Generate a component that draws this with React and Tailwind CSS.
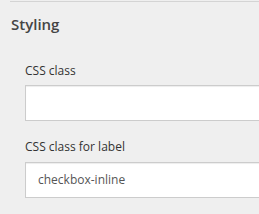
export default function App() {
  return (
    <div
      className="w-[259px] h-[214px] overflow-hidden bg-[#efefef]"
      style={{ fontFamily: '"Open Sans", "Liberation Sans", sans-serif' }}
    >
      <div className="mt-[1px] ml-[10px] border-t border-[#d4d4d4]" />
      <div className="mt-[12px] ml-[11px] text-[15px] leading-[20px] font-semibold text-[#444]">
        Styling
      </div>
      <div className="pl-[25px]">
        <div className="mt-[28px] text-[12px] leading-[18px] text-[#333]">CSS class</div>
        <div className="mt-[5px] h-[36px] w-[300px] bg-white border border-[#cccccc] shadow-[inset_0_1px_1px_rgba(0,0,0,0.075)]" />
        <div className="mt-[17px] text-[12px] leading-[18px] text-[#333]">CSS class for label</div>
        <div className="mt-[6px] h-[36px] w-[300px] bg-white border border-[#cccccc] shadow-[inset_0_1px_1px_rgba(0,0,0,0.075)] flex items-center pl-[12px] text-[12px] leading-[18px] text-[#555]">
          checkbox-inline
        </div>
      </div>
    </div>
  );
}
